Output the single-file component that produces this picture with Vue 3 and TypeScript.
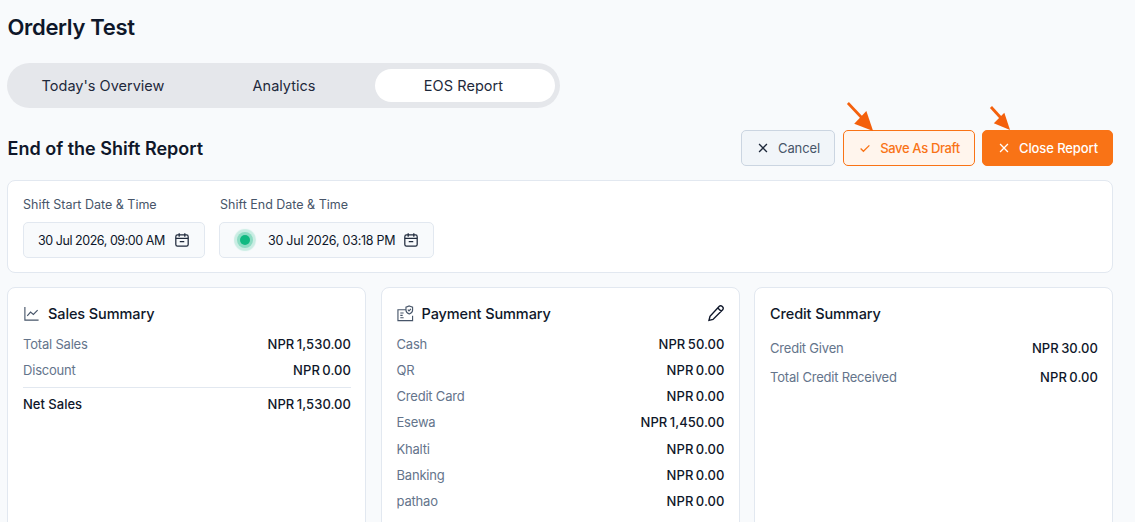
<template>
  <div class="page">
    <h1 class="title">Orderly Test</h1>

    <div class="tabs">
      <button v-for="tab in tabs" :key="tab" class="tab" :class="{ active: tab === 'EOS Report' }">{{ tab }}</button>
    </div>

    <div class="head">
      <h2>End of the Shift Report</h2>
      <div class="actions">
        <button class="btn cancel">
          <svg viewBox="0 0 16 16" class="btn-icon"><path d="M3.5 3.5l9 9M12.5 3.5l-9 9" /></svg>
          Cancel
        </button>
        <button class="btn draft">
          <svg viewBox="0 0 16 16" class="btn-icon"><path d="M3 8.5l3.2 3.2L13 5" /></svg>
          Save As Draft
          <svg class="arrow arrow-draft" viewBox="0 0 30 32"><path class="shaft" d="M1 1l17 18" /><path class="head-tip" d="M29 32L8 24 21.500 10z" /></svg>
        </button>
        <button class="btn close">
          <svg viewBox="0 0 16 16" class="btn-icon"><path d="M3.5 3.5l9 9M12.5 3.5l-9 9" /></svg>
          Close Report
          <svg class="arrow arrow-close" viewBox="0 0 22 25"><path class="shaft" d="M1 1l11 12" /><path class="head-tip" d="M21 25L4 18 15 7z" /></svg>
        </button>
      </div>
    </div>

    <div class="shift card">
      <div class="field">
        <label>Shift Start Date &amp; Time</label>
        <div class="date start">
          <span>30 Jul 2026, 09:00 AM</span>
          <svg viewBox="0 0 16 16" class="cal"><rect x="2.5" y="3.5" width="11" height="10" rx="1.5" /><path d="M2.5 6.5h11M5.5 2v3M10.5 2v3M6 9.5h4" /></svg>
        </div>
      </div>
      <div class="field">
        <label class="end-label">Shift End Date &amp; Time</label>
        <div class="date end">
          <i class="live"></i>
          <span>30 Jul 2026, 03:18 PM</span>
          <svg viewBox="0 0 16 16" class="cal"><rect x="2.5" y="3.5" width="11" height="10" rx="1.5" /><path d="M2.5 6.5h11M5.5 2v3M10.5 2v3M6 9.5h4" /></svg>
        </div>
      </div>
    </div>

    <div class="summary">
      <section class="card panel">
        <div class="panel-head">
          <svg viewBox="0 0 18 18" class="head-icon"><path d="M2 2v14h14.500M4.500 11.500l3.500-4 3 2.500 4.500-4.500" /></svg>
          <h3>Sales Summary</h3>
        </div>
        <div v-for="r in sales" :key="r.label" class="row">
          <span class="label">{{ r.label }}</span><span class="amount">{{ r.value }}</span>
        </div>
        <div class="row net">
          <span>Net Sales</span><span class="amount">NPR 1,530.00</span>
        </div>
      </section>

      <section class="card panel">
        <div class="panel-head">
          <svg viewBox="0 0 18 18" class="head-icon"><path d="M9.500 5H1v11.500h15.500v-5M3.500 8.500h3.500M3.500 11h2.500M3.500 13.500h3.500" /><path d="M13 1l3.500 1.300v3.200c0 2-1.500 3.200-3.500 4-2-.8-3.500-2-3.500-4V2.300zM11.500 5l1.200 1.200L14.800 4" /></svg>
          <h3>Payment Summary</h3>
          <svg viewBox="0 0 18 18" class="pencil"><path d="M12.300 2.300a1.900 1.900 0 0 1 2.700 0l.7.700a1.900 1.900 0 0 1 0 2.700L6 15.400l-4 1 1-4zM10.800 4l3.600 3.600" /></svg>
        </div>
        <div v-for="r in payments" :key="r.label" class="row">
          <span class="label">{{ r.label }}</span><span class="amount">{{ r.value }}</span>
        </div>
      </section>

      <section class="card panel credit">
        <div class="panel-head">
          <h3>Credit Summary</h3>
        </div>
        <div v-for="r in credit" :key="r.label" class="row">
          <span class="label">{{ r.label }}</span><span class="amount">{{ r.value }}</span>
        </div>
      </section>
    </div>
  </div>
</template>

<script setup lang="ts">
const tabs = ["Today's Overview", "Analytics", "EOS Report"];

const sales = [
  { label: "Total Sales", value: "NPR 1,530.00" },
  { label: "Discount", value: "NPR 0.00" },
];

const payments = [
  { label: "Cash", value: "NPR 50.00" },
  { label: "QR", value: "NPR 0.00" },
  { label: "Credit Card", value: "NPR 0.00" },
  { label: "Esewa", value: "NPR 1,450.00" },
  { label: "Khalti", value: "NPR 0.00" },
  { label: "Banking", value: "NPR 0.00" },
  { label: "pathao", value: "NPR 0.00" },
];

const credit = [
  { label: "Credit Given", value: "NPR 30.00" },
  { label: "Total Credit Received", value: "NPR 0.00" },
];
</script>

<style>
html,
body {
  margin: 0;
  height: 100%;
  overflow: hidden;
  background: #f8fafc;
}
</style>

<style scoped>
.page {
  box-sizing: border-box;
  height: 522px;
  overflow: hidden;
  padding: 14px 22px 0 7px;
  font-family: Inter, "Liberation Sans", sans-serif;
  color: #0f172a;
}
.title {
  margin: 0;
  padding-left: 0.5px;
  font-size: 22px;
  line-height: 27px;
  font-weight: 600;
  letter-spacing: -0.32px;
}
.tabs {
  display: inline-flex;
  gap: 1px;
  margin-top: 22px;
  padding: 6px 5px 6px 6px;
  height: 33px;
  border-radius: 23px;
  background: #e5e7eb;
}
.tab {
  width: 180px;
  border: 0;
  border-radius: 17px;
  background: transparent;
  font: 400 14.5px Inter, "Liberation Sans", sans-serif;
  color: #1e293b;
}
.tab.active {
  background: #fff;
  padding-right: 9px;
  letter-spacing: 0.05px;
}
.head {
  display: flex;
  align-items: center;
  justify-content: space-between;
  margin-top: 22px;
}
.head h2 {
  margin: 0;
  padding-left: 0.5px;
  font-size: 18px;
  font-weight: 600;
}
.actions {
  display: flex;
  gap: 8px;
}
.btn {
  position: relative;
  display: flex;
  align-items: center;
  justify-content: center;
  gap: 8px;
  box-sizing: border-box;
  height: 36px;
  border: 1px solid;
  border-radius: 5px;
  font: 500 13px Inter, "Liberation Sans", sans-serif;
  letter-spacing: -0.1px;
}
.btn-icon {
  width: 14px;
  height: 14px;
  fill: none;
  stroke: currentColor;
  stroke-width: 1.5;
}
.cancel {
  width: 94px;
  background: #f1f5f9;
  border-color: #cbd5e1;
  color: #475569;
  font-weight: 400;
}
.cancel .btn-icon {
  color: #1e293b;
}
.draft {
  width: 132px;
  margin-right: -1px;
  background: #fff5ed;
  border-color: #f97316;
  color: #f97316;
  letter-spacing: -0.35px;
}
.close {
  width: 131px;
  background: #f97316;
  border-color: #f97316;
  color: #fff;
}
.arrow {
  position: absolute;
  overflow: visible;
}
.arrow-draft {
  left: 3px;
  top: -29px;
  width: 27px;
  height: 29px;
}
.arrow-close {
  left: 7px;
  top: -25px;
  width: 21px;
  height: 24px;
}
.shaft {
  fill: none;
  stroke: #f4600c;
  stroke-width: 3;
}
.head-tip {
  fill: #f4600c;
}
.card {
  box-sizing: border-box;
  background: #fff;
  border: 1px solid #e2e8f0;
  border-radius: 8px;
}
.shift {
  display: flex;
  gap: 14px;
  height: 93px;
  margin-top: 14px;
  padding: 16px 15px;
}
.field label {
  display: block;
  font-size: 12.5px;
  line-height: 16px;
  color: #475569;
  margin-bottom: 9px;
}
.field .end-label {
  padding-left: 1px;
}
.date {
  display: flex;
  align-items: center;
  box-sizing: border-box;
  height: 36px;
  padding-right: 13px;
  background: #f8fafc;
  border: 1px solid #e2e8f0;
  border-radius: 5px;
  font-size: 12.5px;
  letter-spacing: -0.45px;
  color: #0f172a;
}
.date.start {
  width: 182px;
  padding-left: 14px;
}
.date.end {
  width: 215px;
  padding-left: 20px;
  letter-spacing: -0.25px;
}
.live {
  flex: none;
  width: 10px;
  height: 10px;
  margin-right: 18px;
  border-radius: 50%;
  background: #10b981;
  box-shadow: 0 0 0 3px rgba(16, 185, 129, 0.32), 0 0 1px 6px rgba(16, 185, 129, 0.2);
}
.cal {
  flex: none;
  width: 18px;
  height: 18px;
  margin-left: auto;
  fill: none;
  stroke: #1e293b;
  stroke-width: 1.1;
}
.summary {
  display: grid;
  grid-template-columns: 359px 359px 359px;
  justify-content: space-between;
  margin-top: 14px;
}
.panel {
  height: 260px;
  padding: 14px 14px 14px 15px;
}
.panel-head {
  display: flex;
  align-items: center;
  gap: 8px;
  height: 22px;
  margin-bottom: 7px;
}
.panel-head h3 {
  margin: 0;
  font-size: 14.5px;
  font-weight: 500;
  letter-spacing: -0.1px;
}
.head-icon {
  width: 17px;
  height: 17px;
  fill: none;
  stroke: #475569;
  stroke-width: 1.2;
}
.pencil {
  width: 18px;
  height: 18px;
  margin-left: auto;
  fill: none;
  stroke: #0f172a;
  stroke-width: 1.4;
}
.row {
  display: flex;
  justify-content: space-between;
  align-items: center;
  height: 26.15px;
  font-size: 13px;
}
.label {
  color: #64748b;
  letter-spacing: -0.2px;
}
.amount {
  font-weight: 500;
  color: #0f172a;
  word-spacing: -1px;
  letter-spacing: 0.05px;
}
.net {
  margin-top: 3.5px;
  padding-top: 3.5px;
  border-top: 1px solid #e2e8f0;
  font-weight: 500;
}
.credit .panel-head {
  margin-bottom: 9px;
}
.credit .row {
  height: 29px;
}
</style>
